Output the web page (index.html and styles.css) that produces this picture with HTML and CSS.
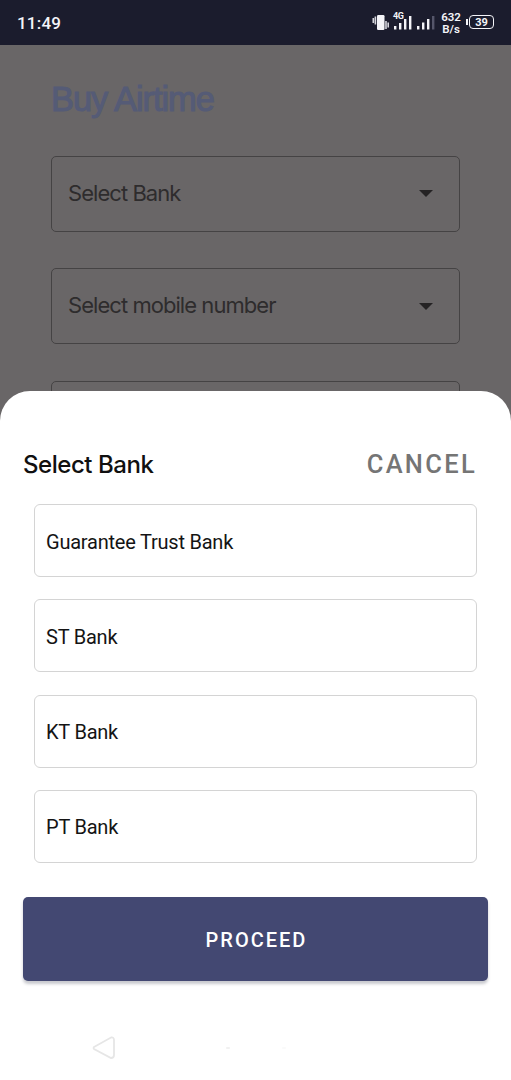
FILE: index.html
```html
<!DOCTYPE html>
<html lang="en">
<head>
<meta charset="utf-8">
<title>Buy Airtime</title>
<link rel="stylesheet" href="styles.css">
</head>
<body>
<div class="screen">
  <header class="status-bar">
    <span class="clock">11:49</span>
    <div class="status-icons">
      <svg class="status-glyphs" width="64" height="24" viewBox="0 0 64 24">
        <rect x="5" y="4" width="7.500" height="15" rx="1.2" fill="#f4f4f8"/>
        <path d="M3.4 5.500v8M1.300 7v5M14 10v8M16.200 11.500v5" stroke="#d5d5dc" stroke-width="1.600" fill="none"/>
        <text class="network" x="21" y="8">4G</text>
        <g fill="#f4f4f8">
          <rect x="22" y="15" width="2.400" height="3.500"/>
          <rect x="27" y="12" width="2.400" height="6.500"/>
          <rect x="32" y="8" width="2.400" height="10.500"/>
          <rect x="37" y="5" width="2.400" height="13.500"/>
          <rect x="45" y="15" width="2.400" height="3.500"/>
          <rect x="50" y="11.500" width="2.400" height="7"/>
          <rect x="55" y="8" width="2.400" height="10.500"/>
        </g>
        <rect x="60" y="5" width="2.400" height="13.500" fill="#55566a"/>
      </svg>
      <div class="speed"><span>632</span><span>B/s</span></div>
      <div class="battery"><i class="battery-cap"></i><span class="battery-level">39</span></div>
    </div>
  </header>

  <main class="page">
    <h1 class="page-title">Buy Airtime</h1>
    <div class="select"><span>Select Bank</span><i class="caret"></i></div>
    <div class="select"><span>Select mobile number</span><i class="caret"></i></div>
    <div class="select"></div>
  </main>

  <section class="sheet">
    <div class="sheet-header">
      <h2 class="sheet-title">Select Bank</h2>
      <button class="cancel">CANCEL</button>
    </div>
    <ul class="banks">
      <li class="bank">Guarantee Trust Bank</li>
      <li class="bank">ST Bank</li>
      <li class="bank">KT Bank</li>
      <li class="bank">PT Bank</li>
    </ul>
    <button class="proceed">PROCEED</button>
    <nav class="nav-bar">
      <svg width="26" height="26" viewBox="0 0 26 26"><path d="M3 12 L20 2.500 Q23 2 23 5 V20 Q23 23 20 23 L3 14 Q2 13 3 12Z" fill="#fff" stroke="#e6e6e6" stroke-width="1.800"/></svg>
      <i class="nav-dot"></i>
      <i class="nav-dot nav-dot-faint"></i>
    </nav>
  </section>
</div>
</body>
</html>
```
FILE: styles.css
```css
* { box-sizing: border-box; }
body { margin: 0; background: #fff; }
h1, h2, ul { margin: 0; padding: 0; list-style: none; }
button { border: 0; padding: 0; background: none; }

.screen {
  position: relative;
  width: 511px;
  height: 1080px;
  overflow: hidden;
  background: #696667;
  font-family: Roboto, sans-serif;
}

.status-bar {
  display: flex;
  justify-content: space-between;
  height: 45px;
  padding: 0 17px;
  background: #1b1c2d;
  color: #f4f4f8;
}
.clock { font-size: 17px; font-weight: 500; line-height: 46px; letter-spacing: .2px; }
.status-icons { display: flex; align-items: flex-start; padding-top: 11px; }
.status-glyphs { display: block; margin-right: 5px; }
.network { font: 700 9px Roboto, sans-serif; fill: #f4f4f8; letter-spacing: -.5px; }
.speed {
  display: flex;
  flex-direction: column;
  align-items: center;
  width: 20px;
  margin-right: 5px;
  font-size: 11.5px;
  font-weight: 600;
  line-height: 12px;
}
.battery { display: flex; align-items: center; gap: 1px; margin-top: 4px; }
.battery-cap { width: 2px; height: 6px; background: #f4f4f8; }
.battery-level {
  width: 25px;
  height: 14px;
  border: 1.5px solid #f4f4f8;
  border-radius: 4px;
  font-size: 11px;
  font-weight: 700;
  line-height: 13px;
  text-align: center;
}

.page { padding: 31px 51px 0; font-family: Inter, sans-serif; }
.page-title {
  height: 79.5px;
  color: #555b76;
  font-family: "Liberation Sans", sans-serif;
  font-size: 34.5px;
  font-weight: 400;
  line-height: 46px;
  letter-spacing: -1.05px;
  -webkit-text-stroke: 1.1px #555b76;
}
.select {
  display: flex;
  align-items: center;
  justify-content: space-between;
  height: 76px;
  margin-bottom: 36.5px;
  padding: 0 26px 2px 16px;
  border: 1.5px solid #454344;
  border-radius: 5px;
  color: #2e2c2d;
  font-size: 22px;
  letter-spacing: -.95px;
}
.caret {
  margin-top: 2px;
  border: 7px solid transparent;
  border-top-color: #252324;
  border-bottom: 0;
}

.sheet {
  position: absolute;
  inset: 391px 0 0;
  padding: 50px 23px 0;
  border-radius: 30px 30px 0 0;
  background: #fff;
}
.sheet-header {
  display: flex;
  align-items: center;
  justify-content: space-between;
  height: 46px;
  padding-right: 11px;
}
.sheet-title {
  color: #101010;
  font: 500 24px Inter, sans-serif;
  letter-spacing: -.45px;
}
.cancel { color: #757575; font: 500 25.5px Roboto, sans-serif; letter-spacing: 2.3px; }
.banks {
  display: grid;
  grid-auto-rows: 73px;
  gap: 22.300px;
  margin: 17px 11px 0;
}
.bank {
  display: flex;
  align-items: center;
  padding: 2px 11px 0;
  border: 1px solid #d4d4d4;
  border-radius: 6px;
  color: #141414;
  font-size: 20px;
  letter-spacing: -.22px;
}
.proceed {
  display: block;
  width: 100%;
  height: 84px;
  margin-top: 34px;
  padding: 2px 0 0 2px;
  border-radius: 5px;
  background: #434872;
  box-shadow: 0 3px 3px rgba(40, 42, 65, .25);
  color: #fff;
  font: 500 20px Roboto, sans-serif;
  letter-spacing: 2px;
}
.nav-bar { display: flex; align-items: center; margin: 54px 0 0 68px; }
.nav-dot { width: 4px; height: 2px; margin-left: 109px; border-radius: 1px; background: #f1f1f1; }
.nav-dot-faint { margin-left: 52px; background: #fafafa; }
```
